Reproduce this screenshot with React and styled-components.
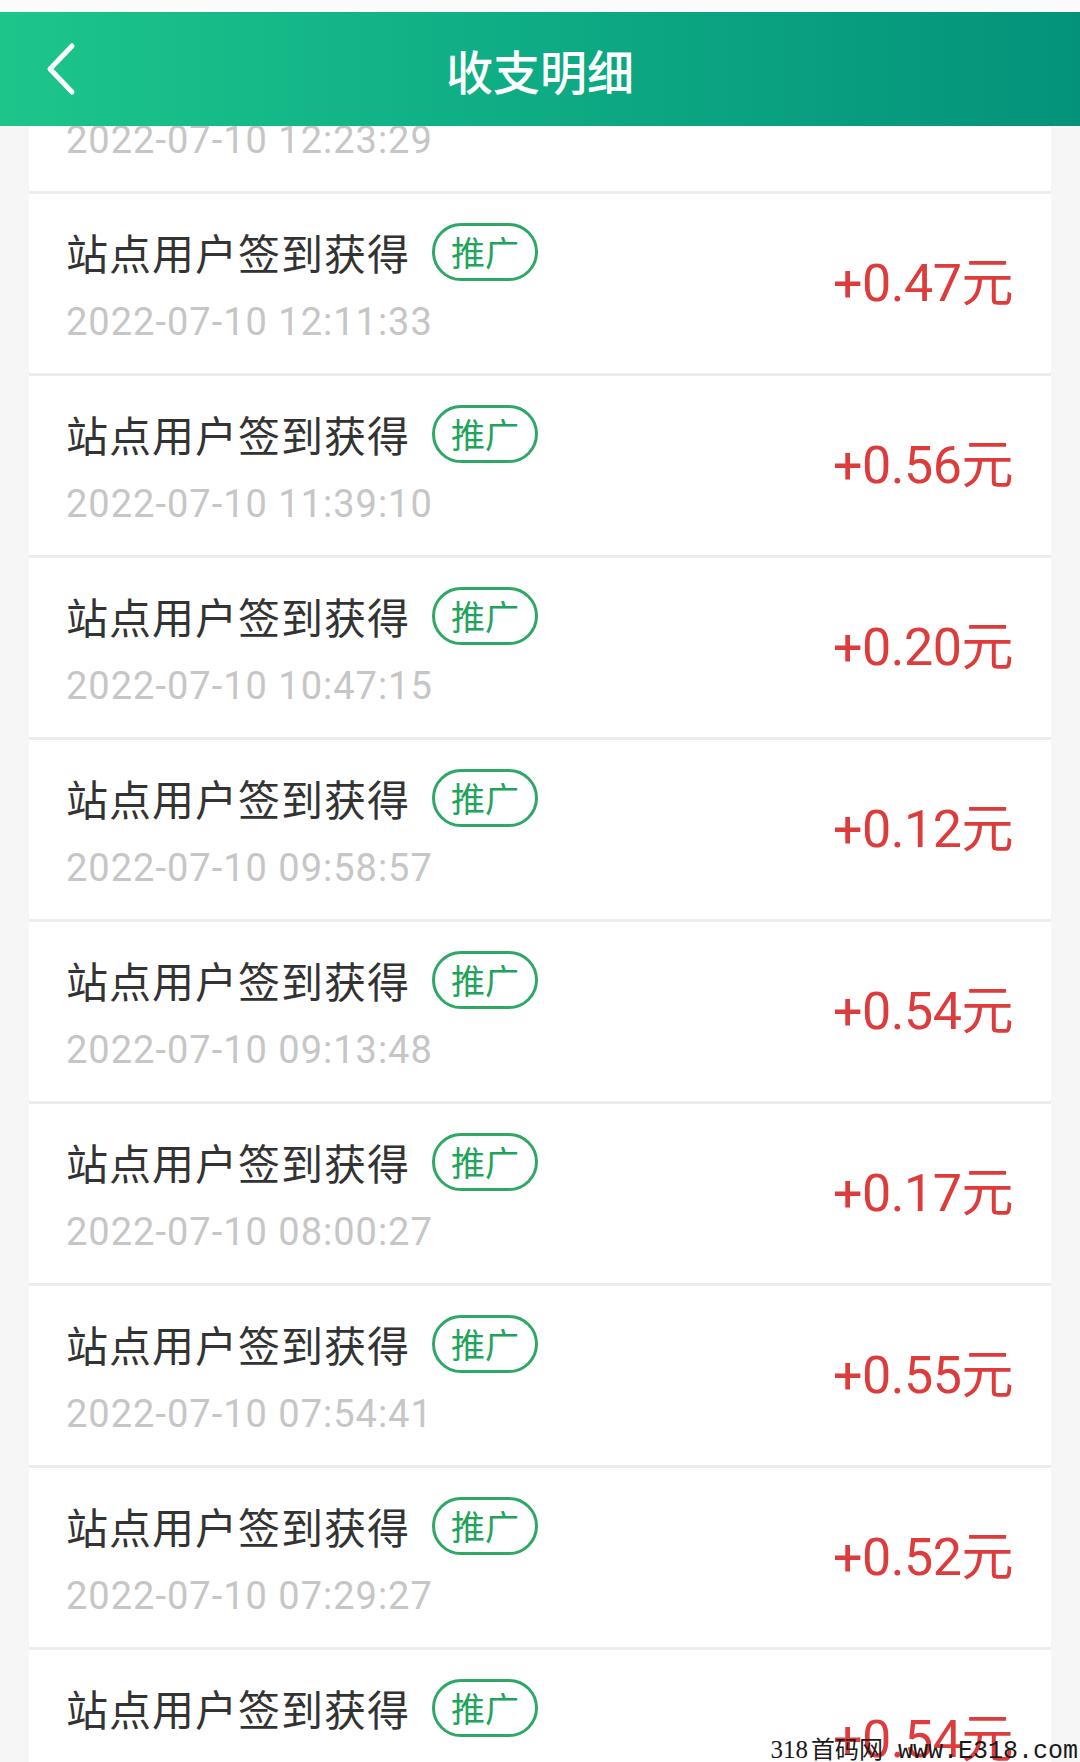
import React from 'react'
import styled, { createGlobalStyle } from 'styled-components'

const GlobalStyle = createGlobalStyle`
  html, body {
    margin: 0;
    padding: 0;
    background: #f6f6f6;
    overflow: hidden;
  }
  * { box-sizing: border-box; }
`

const records = [
 { time: '2022-07-10 12:23:29', amount: '+0.33' },
 { time: '2022-07-10 12:11:33', amount: '+0.47' },
 { time: '2022-07-10 11:39:10', amount: '+0.56' },
 { time: '2022-07-10 10:47:15', amount: '+0.20' },
 { time: '2022-07-10 09:58:57', amount: '+0.12' },
 { time: '2022-07-10 09:13:48', amount: '+0.54' },
 { time: '2022-07-10 08:00:27', amount: '+0.17' },
 { time: '2022-07-10 07:54:41', amount: '+0.55' },
 { time: '2022-07-10 07:29:27', amount: '+0.52' },
 { time: '2022-07-10 06:41:40', amount: '+0.54' },
]

const App = () => {
 return (
  <Screen>
   <GlobalStyle />
   <StatusStrip />
   <List>
    {records.map((r, i) => (
     <Row key={i}>
      <Info>
       <TitleLine>
        <Title>站点用户签到获得</Title>
        <Tag>推广</Tag>
       </TitleLine>
       <Time>{r.time}</Time>
      </Info>
      <Amount>{r.amount}元</Amount>
     </Row>
    ))}
   </List>
   <Header>
    <Back aria-label="返回">
     <svg width="32" height="54" viewBox="0 0 32 54" fill="none">
      <path d="M27 4 L5 27 L27 50" stroke="#fff" strokeWidth="5" strokeLinecap="round" strokeLinejoin="round" />
     </svg>
    </Back>
    <HeaderTitle>收支明细</HeaderTitle>
   </Header>
   <Watermark>
    <span className="num">318</span>
    <span className="cjk">首码网</span>
    <span className="url"> www.E318.com</span>
   </Watermark>
  </Screen>
 )
}

export default App

const Screen = styled.div`
  position: relative;
  width: 1080px;
  height: 1762px;
  overflow: hidden;
  background: #f6f6f6;
  font-family: Roboto, "Noto Sans CJK SC", sans-serif;
`

const StatusStrip = styled.div`
  height: 12px;
  background: #fbfbfb;
`

const Header = styled.header`
  position: absolute;
  top: 12px;
  left: 0;
  right: 0;
  height: 114px;
  display: flex;
  align-items: center;
  justify-content: center;
  background: linear-gradient(90deg, #1dc58b 0%, #0fae85 45%, #04927b 100%);
  z-index: 2;
`

const Back = styled.div`
  position: absolute;
  left: 45px;
  top: 30px;
  width: 32px;
  height: 54px;
  svg { display: block; }
`

const HeaderTitle = styled.h1`
  margin: 0;
  padding-top: 0;
  color: #fff;
  font-family: "Noto Sans CJK SC", sans-serif;
  font-size: 47px;
  font-weight: 500;
  line-height: 1;
`

const List = styled.div`
  margin: 0 29px;
  display: flex;
  flex-direction: column;
  gap: 3px;
  background: #ececec;
`

const Row = styled.div`
  height: 179px;
  flex-shrink: 0;
  background: #fff;
  display: flex;
  align-items: center;
  justify-content: space-between;
  padding: 0 38px 0 37px;
`

const Info = styled.div`
  padding-top: 4px;
  display: flex;
  flex-direction: column;
`

const TitleLine = styled.div`
  height: 50px;
  display: flex;
  align-items: center;
`

const Title = styled.span`
  font-family: "Noto Sans CJK SC", sans-serif;
  font-size: 42px;
  letter-spacing: 1px;
  line-height: 50px;
  color: #333;
`

const Tag = styled.span`
  margin-left: 22px;
  height: 58px;
  padding: 0 16px;
  display: inline-flex;
  align-items: center;
  border: 3px solid #2fa866;
  border-radius: 29px;
  color: #22a35c;
  font-family: "Noto Sans CJK SC", sans-serif;
  font-size: 34px;
  line-height: 1;
`

const Time = styled.div`
  margin-top: 23px;
  font-family: Roboto, sans-serif;
  font-size: 38px;
  letter-spacing: 1px;
  line-height: 44px;
  color: #c6c6c6;
  white-space: nowrap;
`

const Amount = styled.div`
  font-family: Roboto, "Noto Sans CJK SC", sans-serif;
  font-size: 52px;
  line-height: 60px;
  letter-spacing: -0.5px;
  color: #dc3c3c;
  white-space: nowrap;
`

const Watermark = styled.div`
  position: absolute;
  right: 2px;
  bottom: -2px;
  display: flex;
  align-items: baseline;
  color: #1a1a1a;
  line-height: 24px;
  z-index: 3;
  white-space: pre;

  .num {
    font-family: "Liberation Serif", serif;
    font-size: 25px;
  }
  .cjk {
    font-family: "Noto Sans CJK SC", sans-serif;
    font-size: 24px;
    margin-left: 3px;
  }
  .url {
    font-family: "Liberation Mono", monospace;
    font-size: 25px;
  }
`
